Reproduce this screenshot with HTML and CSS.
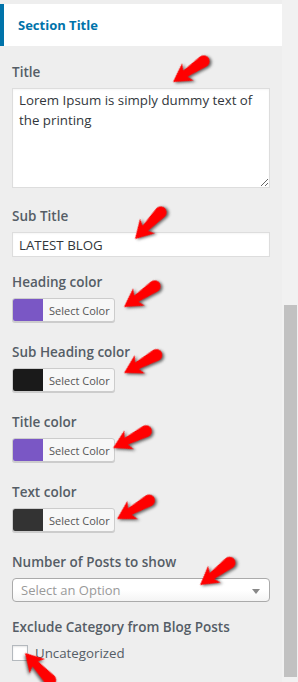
FILE: index.html
```html
<!DOCTYPE html>
<html lang="en">
<head>
    <meta charset="UTF-8">
    <meta name="viewport" content="width=device-width, initial-scale=1.0">
    <title>Customizer - Section Title</title>
    <link rel="stylesheet" href="styles.css">
</head>
<body>

    <div class="screen">
        <div class="panel">
            <div class="section-head">Section Title</div>

            <div class="controls">
                <div class="control control-textarea">
                    <label class="control-title" for="title">Title</label>
                    <textarea id="title">Lorem Ipsum is simply dummy text of the printing</textarea>
                </div>

                <div class="control">
                    <label class="control-title" for="sub-title">Sub Title</label>
                    <input type="text" id="sub-title" value="LATEST BLOG">
                </div>

                <div class="control control-color">
                    <span class="control-title">Heading color</span>
                    <button class="color-btn"><span class="swatch swatch-purple"></span><span class="color-label">Select Color</span></button>
                </div>

                <div class="control control-color">
                    <span class="control-title">Sub Heading color</span>
                    <button class="color-btn"><span class="swatch swatch-black"></span><span class="color-label">Select Color</span></button>
                </div>

                <div class="control control-color">
                    <span class="control-title">Title color</span>
                    <button class="color-btn"><span class="swatch swatch-purple"></span><span class="color-label">Select Color</span></button>
                </div>

                <div class="control control-color">
                    <span class="control-title">Text color</span>
                    <button class="color-btn"><span class="swatch swatch-dark"></span><span class="color-label">Select Color</span></button>
                </div>

                <div class="control">
                    <span class="control-title">Number of Posts to show</span>
                    <div class="select-box">
                        <span class="select-placeholder">Select an Option</span>
                        <span class="select-arrow"></span>
                    </div>
                </div>

                <div class="control">
                    <span class="control-title">Exclude Category from Blog Posts</span>
                    <label class="check-row">
                        <input type="checkbox">
                        <span>Uncategorized</span>
                    </label>
                </div>
            </div>
        </div>

        <div class="scrollbar">
            <div class="thumb"></div>
        </div>

        <!-- annotation arrows drawn over the screenshot -->
        <svg class="marks" width="298" height="682" viewBox="0 0 298 682">
            <defs>
                <path id="arrow" d="M0,0 L18,-10.5 L15,-3.8 L37,-6 A6,6 0 0 1 37,6 L15,3.8 L18,10.5 Z"/>
            </defs>
            <use href="#arrow" transform="translate(173,82) rotate(-34)"/>
            <use href="#arrow" transform="translate(135,239) rotate(-46)"/>
            <use href="#arrow" transform="translate(124,307) rotate(-34)"/>
            <use href="#arrow" transform="translate(124,373) rotate(-29)"/>
            <use href="#arrow" transform="translate(113,448) rotate(-27)"/>
            <use href="#arrow" transform="translate(117,519) rotate(-30)"/>
            <use href="#arrow" transform="translate(200,585) rotate(-37)"/>
            <use href="#arrow" transform="translate(25,653) rotate(47)"/>
        </svg>
    </div>

</body>
</html>
```

FILE: styles.css
```css
body {
    margin: 0;
    padding: 0;
    font-family: 'Open Sans', sans-serif;
    background-color: #eeeeee;
    color: #555d66;
}

.screen {
    position: relative;
    display: flex;
    width: 298px;
    height: 682px;
    overflow: hidden;
}

.panel {
    width: 282px;
    background-color: #eeeeee;
}

.section-head {
    margin-top: 4px;
    height: 42px;
    background-color: #fff;
    border-left: 4px solid #0073aa;
    padding-left: 14px;
    display: flex;
    align-items: center;
    font-size: 13px;
    font-weight: 700;
    color: #0073aa;
}

.controls {
    padding: 14px 12px 0 12px;
}

.control {
    margin-bottom: 13px;
}

.control-textarea {
    margin-bottom: 16px;
}

.control-color {
    margin-bottom: 18px;
}

.control-title {
    display: block;
    font-size: 13.5px;
    font-weight: 600;
    line-height: 24px;
    margin-bottom: 4px;
    color: #555d66;
}

.control textarea,
.control input[type="text"] {
    display: block;
    box-sizing: border-box;
    width: 258px;
    margin: 0;
    border: 1px solid #ddd;
    background-color: #fff;
    font-family: 'Open Sans', sans-serif;
    font-size: 13.3px;
    color: #32373c;
    box-shadow: inset 0 1px 2px rgba(0, 0, 0, 0.04);
    outline: none;
}

.control textarea {
    height: 100px;
    padding: 2px 6px;
    line-height: 19.5px;
}

.control input[type="text"] {
    height: 25px;
    padding: 0 6px;
}

.color-btn {
    display: flex;
    align-items: stretch;
    box-sizing: border-box;
    width: 103px;
    height: 24px;
    padding: 0;
    margin: 0;
    border: 1px solid #ccc;
    border-radius: 3px;
    background-color: #f7f7f7;
    box-shadow: 0 1px 0 #ccc;
    font-family: 'Open Sans', sans-serif;
    cursor: pointer;
}

.swatch {
    width: 30px;
    border-radius: 2px 0 0 2px;
}

.swatch-purple {
    background-color: #7a57c5;
}

.swatch-black {
    background-color: #1a1a1a;
}

.swatch-dark {
    background-color: #333333;
}

.color-label {
    display: flex;
    align-items: center;
    padding-left: 6px;
    font-size: 11px;
    color: #555;
}

.select-box {
    position: relative;
    box-sizing: border-box;
    width: 258px;
    height: 24px;
    border: 1px solid #aaa;
    border-radius: 4px;
    background: linear-gradient(#fff 50%, #f4f4f4);
    display: flex;
    align-items: center;
    padding-left: 8px;
}

.select-placeholder {
    font-size: 13px;
    color: #999;
}

.select-arrow {
    position: absolute;
    right: 9px;
    top: 10px;
    border-left: 4px solid transparent;
    border-right: 4px solid transparent;
    border-top: 5px solid #888;
}

.check-row {
    display: flex;
    align-items: center;
    gap: 7px;
    margin-top: 5px;
    font-size: 13.3px;
    color: #555d66;
}

.check-row input {
    appearance: none;
    width: 16px;
    height: 16px;
    margin: 0;
    border: 1px solid #b4b9be;
    background-color: #fff;
    box-shadow: inset 0 1px 2px rgba(0, 0, 0, 0.1);
}

.scrollbar {
    width: 16px;
    background-color: #f1f1f1;
    padding-top: 305px;
    padding-left: 2px;
    box-sizing: border-box;
}

.thumb {
    width: 13px;
    height: 372px;
    background-color: #c1c1c1;
}

.marks {
    position: absolute;
    left: 0;
    top: 0;
    pointer-events: none;
}

.marks use {
    fill: #ff0000;
    filter: drop-shadow(1px 2px 1.5px rgba(0, 0, 0, 0.6));
}
```
